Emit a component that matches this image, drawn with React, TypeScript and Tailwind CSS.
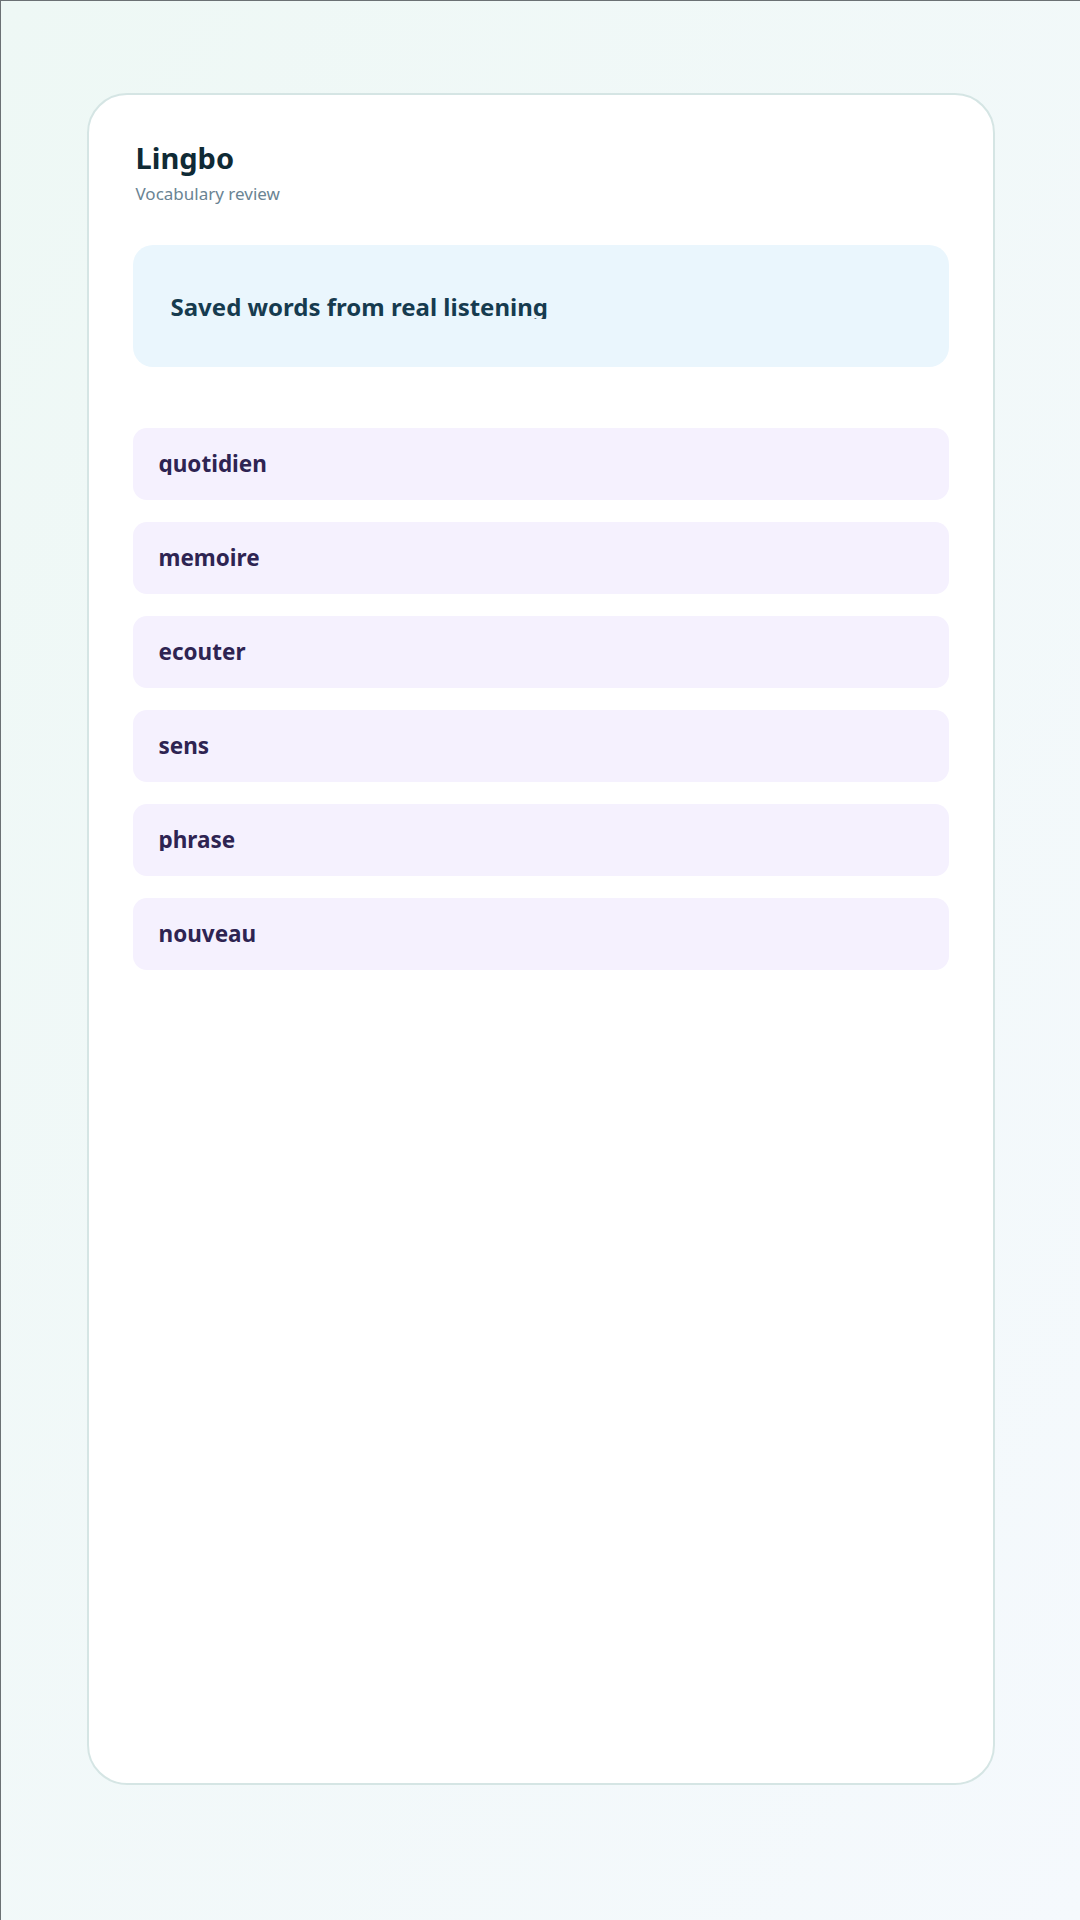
const words = ["quotidien", "memoire", "ecouter", "sens", "phrase", "nouveau"];

export default function App() {
  return (
    <div
      className="min-h-[1920px] border-t border-l border-[#6b7174] bg-gradient-to-br from-[#eef8f5] to-[#f5f9fd] pt-[92px]"
      style={{ fontFamily: '"Noto Sans", "Open Sans", sans-serif' }}
    >
      <div className="mx-auto flex h-[1692px] w-[908px] flex-col rounded-[40px] border-2 border-[#d5e5e4] bg-white p-11">
        <header className="flex flex-col pl-[3px]">
          <h1 className="text-[29px] font-bold leading-[1.3] text-[#0f2a35]">Lingbo</h1>
          <p className="mt-1 text-[17px] leading-[1.5] text-[#6a8493]">Vocabulary review</p>
        </header>

        <section className="mt-[39px] flex h-[122px] items-center rounded-[20px] bg-[#eaf6fd] px-[38px]">
          <h2 className="truncate pt-[2px] text-[24px] font-bold leading-none text-[#163b4f]">
            Saved words from real listening
          </h2>
        </section>

        <ul className="mt-[61px] flex flex-col gap-[22px]">
          {words.map((w) => (
            <li key={w} className="flex h-[72px] items-center rounded-[14px] bg-[#f5f1fe] px-[26px]">
              <span className="truncate text-[22.5px] font-bold leading-none text-[#2e2452]">{w}</span>
            </li>
          ))}
        </ul>
      </div>
    </div>
  );
}
